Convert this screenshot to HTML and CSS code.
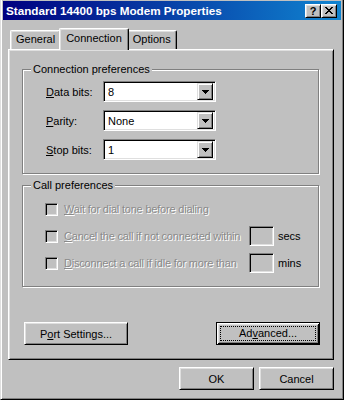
FILE: index.html
```html
<!DOCTYPE html>
<html lang="en">
<head>
    <meta charset="UTF-8">
    <title>Standard 14400 bps Modem Properties</title>
    <link rel="stylesheet" href="styles.css">
</head>
<body>
    <div class="window">
        <div class="titlebar">
            <span class="title">Standard 14400 bps Modem Properties</span>
            <div class="title-buttons">
                <button class="tbtn">?</button>
                <button class="tbtn">
                    <svg width="8" height="7" viewBox="0 0 8 7" shape-rendering="crispEdges">
                        <path fill="#000" d="M0 0h2v1h-2z M6 0h2v1h-2z M1 1h2v1h-2z M5 1h2v1h-2z M2 2h4v1h-4z M3 3h2v1h-2z M2 4h4v1h-4z M1 5h2v1h-2z M5 5h2v1h-2z M0 6h2v1h-2z M6 6h2v1h-2z"/>
                    </svg>
                </button>
            </div>
        </div>

        <div class="dialog">
            <div class="tabs">
                <div class="tab">General</div>
                <div class="tab active">Connection</div>
                <div class="tab">Options</div>
            </div>

            <div class="panel">
                <fieldset class="group">
                    <legend>Connection preferences</legend>
                    <div class="rows">
                        <div class="row">
                            <label class="row-label"><u>D</u>ata bits:</label>
                            <div class="combo"><span>8</span><span class="drop"><svg width="7" height="4" viewBox="0 0 7 4" shape-rendering="crispEdges"><path fill="#000" d="M0 0h7v1h-1v1h-1v1h-1v1h-1v-1h-1v-1h-1v-1h-1z"/></svg></span></div>
                        </div>
                        <div class="row">
                            <label class="row-label"><u>P</u>arity:</label>
                            <div class="combo"><span>None</span><span class="drop"><svg width="7" height="4" viewBox="0 0 7 4" shape-rendering="crispEdges"><path fill="#000" d="M0 0h7v1h-1v1h-1v1h-1v1h-1v-1h-1v-1h-1v-1h-1z"/></svg></span></div>
                        </div>
                        <div class="row">
                            <label class="row-label"><u>S</u>top bits:</label>
                            <div class="combo"><span>1</span><span class="drop"><svg width="7" height="4" viewBox="0 0 7 4" shape-rendering="crispEdges"><path fill="#000" d="M0 0h7v1h-1v1h-1v1h-1v1h-1v-1h-1v-1h-1v-1h-1z"/></svg></span></div>
                        </div>
                    </div>
                </fieldset>

                <fieldset class="group group-call">
                    <legend>Call preferences</legend>
                    <div class="checks">
                        <div class="check-row">
                            <span class="checkbox"></span>
                            <span class="disabled"><u>W</u>ait for dial tone before dialing</span>
                        </div>
                        <div class="check-row">
                            <span class="checkbox"></span>
                            <span class="disabled check-text"><u>C</u>ancel the call if not connected within</span>
                            <span class="edit"></span>
                            <span class="unit">secs</span>
                        </div>
                        <div class="check-row">
                            <span class="checkbox"></span>
                            <span class="disabled check-text"><u>D</u>isconnect a call if idle for more than</span>
                            <span class="edit"></span>
                            <span class="unit">mins</span>
                        </div>
                    </div>
                </fieldset>

                <div class="panel-buttons">
                    <button class="btn btn-wide">P<u>o</u>rt Settings...</button>
                    <button class="btn btn-wide btn-default"><span class="focus">Ad<u>v</u>anced...</span></button>
                </div>
            </div>

            <div class="dialog-buttons">
                <button class="btn">OK</button>
                <button class="btn">Cancel</button>
            </div>
        </div>
    </div>
</body>
</html>
```

FILE: styles.css
```css
/* Base */
* {
    box-sizing: border-box;
}

body {
    margin: 0;
    background: #c0c0c0;
    font-family: 'Liberation Sans', Arial, sans-serif;
    font-size: 11px;
    color: #000;
}

u {
    text-decoration: underline;
    text-underline-offset: 1px;
}

/* Window frame */
.window {
    width: 344px;
    height: 400px;
    background: #c0c0c0;
    border-left: 1px solid #dfdfdf;
    border-right: 1px solid #000;
    border-bottom: 1px solid #000;
    box-shadow: inset 1px 0 #fff, inset -1px -1px #808080;
    padding: 1px 2px 2px;
}

/* Title bar */
.titlebar {
    height: 19px;
    display: flex;
    align-items: center;
    justify-content: space-between;
    padding: 0 4px 0 3px;
    background: linear-gradient(to right, #000080, #1084d0);
    color: #fff;
}

.title {
    font-size: 11.7px;
    font-weight: bold;
}

.title-buttons {
    display: flex;
}

.tbtn {
    width: 16px;
    height: 14px;
    padding: 0;
    display: flex;
    align-items: center;
    justify-content: center;
    background: #c0c0c0;
    border: 1px solid;
    border-color: #fff #000 #000 #fff;
    box-shadow: inset 1px 1px #dfdfdf, inset -1px -1px #808080;
    font: bold 11px 'Liberation Sans', Arial, sans-serif;
    color: #000;
}

/* Dialog */
.dialog {
    padding-left: 5px;
}

.tabs {
    display: flex;
    align-items: flex-end;
    height: 21px;
    margin-top: 8px;
    padding-left: 2px;
}

.tab {
    height: 19px;
    padding: 0 5px;
    line-height: 17px;
    background: #c0c0c0;
    border: 1px solid;
    border-color: #fff #000 transparent #fff;
    border-bottom: none;
    border-radius: 2px 2px 0 0;
    box-shadow: inset -1px 0 #808080, inset 1px 1px #dfdfdf;
}

.tab.active {
    position: relative;
    z-index: 1;
    height: 22px;
    margin: 0 -2px -1px;
    padding: 0 6px;
    line-height: 18px;
}

.panel {
    width: 326px;
    height: 311px;
    border: 1px solid;
    border-color: #fff #000 #000 #fff;
    box-shadow: inset 1px 1px #dfdfdf, inset -1px -1px #808080;
    padding: 13px 0 0 13px;
}

/* Group boxes */
.group {
    width: 297px;
    margin: 0;
    min-width: 0;
    padding: 0 0 13px 22px;
    border: 1px solid #808080;
    box-shadow: 1px 1px #fff, inset 1px 1px #fff;
}

.group legend {
    margin-left: -14px;
    padding: 0 2px;
    line-height: 13px;
    background: #c0c0c0;
}

.group-call {
    margin-top: 5px;
}

.rows {
    display: flex;
    flex-direction: column;
    gap: 8px;
    padding: 5px 0 0 1px;
}

.row {
    display: flex;
    align-items: center;
    height: 21px;
}

.row-label {
    width: 57px;
}

.combo {
    width: 113px;
    height: 21px;
    display: flex;
    align-items: center;
    justify-content: space-between;
    padding: 2px 2px 2px 4px;
    background: #fff;
    border: 1px solid;
    border-color: #808080 #fff #fff #808080;
    box-shadow: inset 1px 1px #000, inset -1px -1px #dfdfdf;
}

.drop {
    width: 16px;
    height: 17px;
    display: flex;
    align-items: center;
    justify-content: center;
    background: #c0c0c0;
    border: 1px solid;
    border-color: #dfdfdf #000 #000 #dfdfdf;
    box-shadow: inset 1px 1px #fff, inset -1px -1px #808080;
}

/* Checkbox rows */
.checks {
    display: flex;
    flex-direction: column;
    gap: 7px;
    padding-top: 7px;
}

.check-row {
    display: flex;
    align-items: center;
    height: 20px;
}

.checkbox {
    width: 13px;
    height: 13px;
    margin-right: 6px;
    background: #c0c0c0;
    border: 1px solid;
    border-color: #808080 #fff #fff #808080;
    box-shadow: inset 1px 1px #000, inset -1px -1px #dfdfdf;
}

.disabled {
    color: #8a8a8a;
    text-shadow: 1px 1px 0 #fff;
    letter-spacing: -0.2px;
}

.check-text {
    width: 185px;
    white-space: nowrap;
}

.edit {
    width: 25px;
    height: 20px;
    background: #c0c0c0;
    border: 1px solid;
    border-color: #808080 #fff #fff #808080;
    box-shadow: inset 1px 1px #000, inset -1px -1px #dfdfdf;
}

.unit {
    margin-left: 4px;
}

/* Buttons */
.btn {
    width: 75px;
    height: 23px;
    padding: 0;
    font: inherit;
    color: #000;
    background: #c0c0c0;
    border: 1px solid;
    border-color: #fff #000 #000 #fff;
    box-shadow: inset 1px 1px #dfdfdf, inset -1px -1px #808080;
}

.btn-wide {
    width: 104px;
}

.btn-default {
    padding: 3px;
    border-color: #000;
    box-shadow: inset 1px 1px #fff, inset -1px -1px #000, inset 2px 2px #dfdfdf, inset -2px -2px #808080;
}

.focus {
    display: block;
    height: 100%;
    line-height: 13px;
    border: 1px dotted #000;
}

.panel-buttons {
    display: flex;
    justify-content: space-between;
    width: 298px;
    margin-top: 35px;
    padding-left: 2px;
}

.dialog-buttons {
    display: flex;
    justify-content: flex-end;
    gap: 5px;
    width: 326px;
    margin-top: 7px;
}
```
